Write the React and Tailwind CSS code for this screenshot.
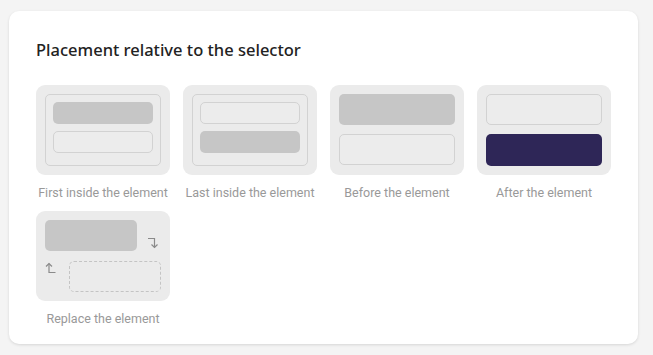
import React from "react";

const Frame = ({ children }) => (
  <div className="h-[90px] w-[134px] rounded-[9px] bg-[#ebebeb] p-[9px]">
    {children}
  </div>
);

const Filled = ({ className = "" }) => (
  <div className={`rounded-[5px] bg-[#c6c6c6] ${className}`} />
);

const Outline = ({ className = "" }) => (
  <div className={`rounded-[5px] border border-[#d2d2d2] bg-[#ececec] ${className}`} />
);

const ArrowDown = () => (
  <svg width="12" height="14" viewBox="0 0 12 14" fill="none" stroke="#8a8a8a" strokeWidth="1.2">
    <path d="M1 2.5h6.5v9" />
    <path d="M4.5 8.5l3 3 3-3" />
  </svg>
);

const ArrowUp = () => (
  <svg width="12" height="14" viewBox="0 0 12 14" fill="none" stroke="#8a8a8a" strokeWidth="1.2">
    <path d="M4 2.5v9h6.5" />
    <path d="M1 5.5l3-3 3 3" />
  </svg>
);

const options = [
  {
    label: "First inside the element",
    body: (
      <div className="flex h-full flex-col gap-[7px] rounded-[5px] border border-[#d2d2d2] p-[7px]">
        <Filled className="h-[22px]" />
        <Outline className="h-[22px]" />
      </div>
    ),
  },
  {
    label: "Last inside the element",
    body: (
      <div className="flex h-full flex-col gap-[7px] rounded-[5px] border border-[#d2d2d2] p-[7px]">
        <Outline className="h-[22px]" />
        <Filled className="h-[22px]" />
      </div>
    ),
  },
  {
    label: "Before the element",
    body: (
      <div className="flex h-full flex-col gap-[9px]">
        <Filled className="h-[31px]" />
        <Outline className="h-[31px]" />
      </div>
    ),
  },
  {
    label: "After the element",
    body: (
      <div className="flex h-full flex-col gap-[9px]">
        <Outline className="h-[31px]" />
        <div className="h-[32px] rounded-[5px] bg-[#2e2657]" />
      </div>
    ),
  },
  {
    label: "Replace the element",
    body: (
      <div className="flex h-full flex-col gap-[10px]">
        <div className="flex items-center">
          <Filled className="h-[31px] w-[92px]" />
          <div className="ml-[10px] mt-[14px]">
            <ArrowDown />
          </div>
        </div>
        <div className="flex items-start">
          <div className="w-[24px]">
            <ArrowUp />
          </div>
          <div className="h-[31px] flex-1 rounded-[5px] border border-dashed border-[#c4c4c4]" />
        </div>
      </div>
    ),
  },
];

export default function App() {
  return (
    <div className="min-h-[355px] bg-[#f4f4f4] pl-[9px] pr-[15px] pt-[11px] pb-[12px]">
      <div className="rounded-[10px] bg-white px-[27px] pt-[28px] pb-[17px] shadow-[0_1px_3px_rgba(0,0,0,0.12)]">
        <h2
          className="text-[16.5px] font-medium leading-[22px] text-[#222]"
          style={{ fontFamily: "'Noto Sans', sans-serif" }}
        >
          Placement relative to the selector
        </h2>
        <div className="mt-[24px] grid grid-cols-[repeat(4,134px)] gap-x-[13px] gap-y-[10px]">
          {options.map((o) => (
            <div key={o.label} className="flex flex-col items-center">
              <Frame>{o.body}</Frame>
              <div
                className="mt-[10px] whitespace-nowrap text-[12.5px] leading-[16px] text-[#999]"
                style={{ fontFamily: "Roboto, sans-serif" }}
              >
                {o.label}
              </div>
            </div>
          ))}
        </div>
      </div>
    </div>
  );
}
